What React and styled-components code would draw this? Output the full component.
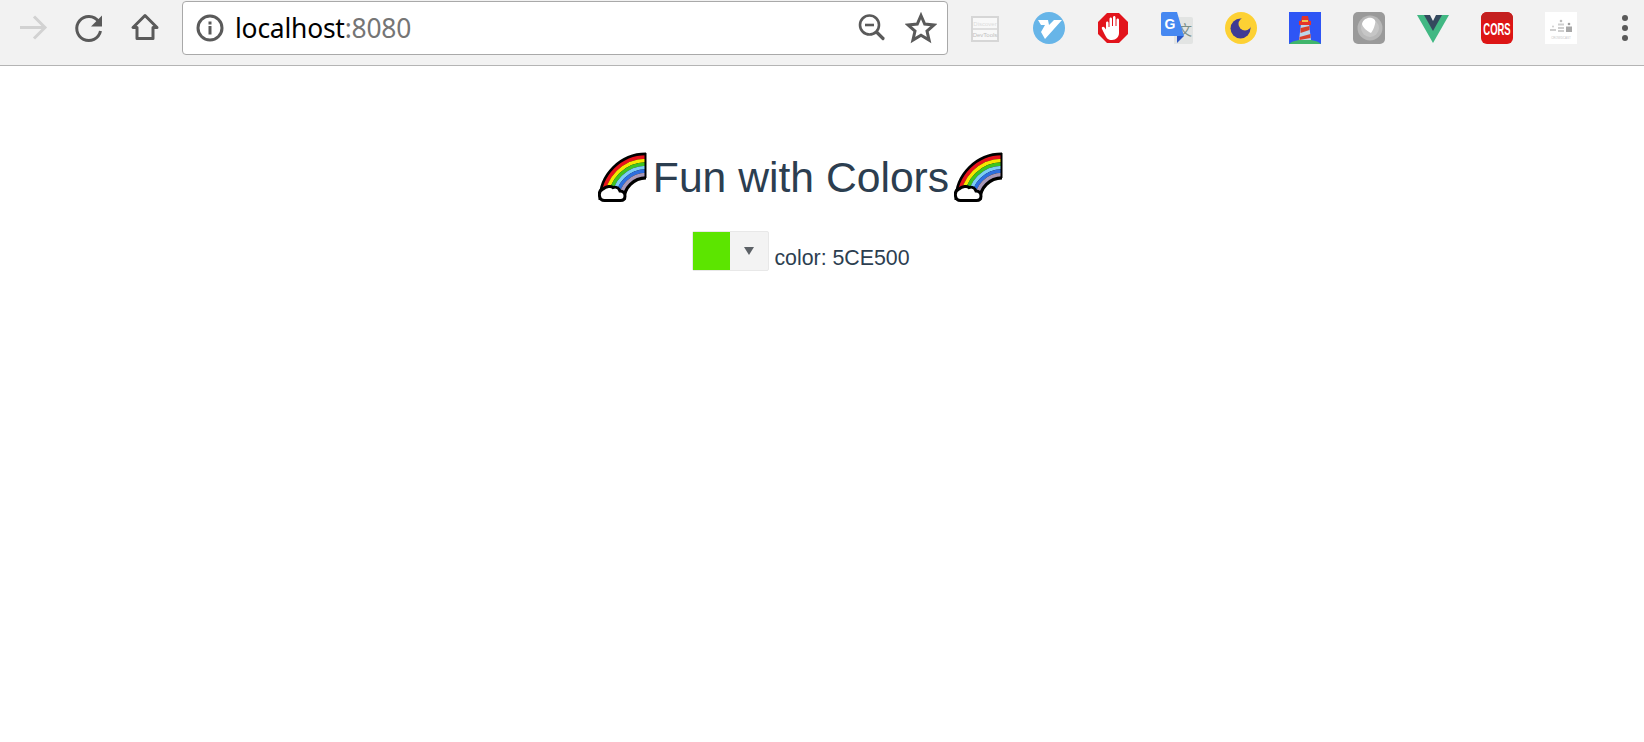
import React from "react";
import styled, { createGlobalStyle } from "styled-components";

const GlobalStyle = createGlobalStyle`
  html, body {
    margin: 0;
    background: #fff;
  }
`;

const Toolbar = styled.div`
  display: flex;
  align-items: center;
  height: 65px;
  background: #f2f2f2;
  border-bottom: 1px solid #b4b4b4;
`;

const NavButtons = styled.div`
  display: flex;
  align-items: center;
  gap: 24px;
  width: 182px;
  padding-left: 17px;
  padding-bottom: 9px;
  box-sizing: border-box;
`;

const NavIcon = styled.svg`
  width: 32px;
  height: 32px;
  display: block;
  flex: none;
`;

const AddressBar = styled.div`
  display: flex;
  align-items: center;
  width: 766px;
  height: 54px;
  margin-bottom: 9px;
  box-sizing: border-box;
  padding: 0 10px 0 11px;
  background: #fff;
  border: 1px solid #a9a9a9;
  border-radius: 4px;
`;

const Url = styled.div`
  flex: 1;
  margin-left: 9px;
  font-family: "Noto Sans", sans-serif;
  font-size: 26.4px;
  line-height: 1;
  color: #000;
  letter-spacing: -0.2px;
`;

const UrlPort = styled.span`
  color: #757575;
`;

const AddressActions = styled.div`
  display: flex;
  align-items: center;
  gap: 16px;
`;

const Extensions = styled.div`
  display: flex;
  align-items: center;
  gap: 32px;
  margin-left: 21px;
  margin-bottom: 9px;
`;

const ExtIcon = styled.svg`
  width: 32px;
  height: 32px;
  display: block;
  flex: none;
`;

const MenuDots = styled.div`
  display: flex;
  flex-direction: column;
  gap: 4px;
  margin-left: 45px;
  margin-bottom: 9px;
`;

const Dot = styled.span`
  width: 6px;
  height: 6px;
  border-radius: 50%;
  background: #5a5a5a;
`;

const Main = styled.main`
  width: 1602px;
  padding-top: 86px;
  text-align: center;
  color: #2c3e50;
  font-family: "Liberation Sans", Arial, sans-serif;
`;

const Title = styled.h1`
  display: flex;
  justify-content: center;
  align-items: center;
  gap: 5px;
  margin: 0;
  height: 50px;
  font-size: 42.67px;
  font-weight: 400;
  line-height: 50px;
`;

const RainbowIcon = styled.svg`
  width: 50px;
  height: 50px;
  display: block;
`;

const ColorRow = styled.div`
  display: flex;
  justify-content: center;
  align-items: flex-end;
  gap: 5px;
  margin-top: 29px;
`;

const Picker = styled.div`
  display: flex;
  width: 77px;
  height: 40px;
  box-sizing: border-box;
  border: 1px solid #e8e8e8;
  border-radius: 2px;
  background: #f3f3f3;
`;

const Swatch = styled.div`
  width: 37px;
  background: ${(props) => props.$color};
`;

const ArrowCell = styled.div`
  flex: 1;
  display: flex;
  justify-content: center;
  padding-top: 15px;
`;

const Arrow = styled.div`
  width: 0;
  height: 0;
  border-left: 5.5px solid transparent;
  border-right: 5.5px solid transparent;
  border-top: 8px solid #5c6166;
`;

const ColorLabel = styled.span`
  font-size: 21.33px;
  line-height: 24px;
  padding-bottom: 1px;
`;

const rainbowBands = [
  { r: 43, color: "#e8141c" },
  { r: 39.5, color: "#f7e600" },
  { r: 36, color: "#3fc41f" },
  { r: 32.5, color: "#7ccdf5" },
  { r: 29, color: "#2d6fe0" },
  { r: 25.5, color: "#a898b8" },
];

function arc(r) {
  return `M48 ${48 - r}A${r} ${r} 0 0 0 ${48 - r} 48`;
}

function Rainbow() {
  return (
    <RainbowIcon viewBox="0 0 50 50">
      <path d={arc(34)} fill="none" stroke="#000" strokeWidth="27" />
      {rainbowBands.map((band) => (
        <path
          key={band.r}
          d={arc(band.r)}
          fill="none"
          stroke={band.color}
          strokeWidth="3.6"
        />
      ))}
      <path d="M46.500 1v25h2V1z" fill="#000" />
      <path
        d="M5 37c-3 1-4 4-3.500 7 .5 3 2.500 4.500 5 4.500h16c3 0 4.500-2 4.500-4.500 0-3-2-5-5-5-1-3-4-4.500-7-3.500-1.500-2-7-1-10 1.500z"
        fill="#fff"
        stroke="#000"
        strokeWidth="3"
      />
    </RainbowIcon>
  );
}

function App() {
  return (
    <>
      <GlobalStyle />
      <Toolbar>
        <NavButtons>
          <NavIcon viewBox="0 0 32 32">
            <path
              d="M3 15.500h25M17 4.500l11 11-11 11"
              fill="none"
              stroke="#d2d2d2"
              strokeWidth="3"
            />
          </NavIcon>
          <NavIcon viewBox="0 0 32 32">
            <path
              d="M25.500 9.500A12 12 0 1 0 27.500 19"
              fill="none"
              stroke="#5a5a5a"
              strokeWidth="3"
            />
            <path d="M29 3.500v11H18z" fill="#5a5a5a" />
          </NavIcon>
          <NavIcon viewBox="0 0 32 32">
            <path
              d="M16 3.500L4 15.500h4v11h16v-11h4z"
              fill="none"
              stroke="#5a5a5a"
              strokeWidth="3"
              strokeLinejoin="round"
            />
          </NavIcon>
        </NavButtons>
        <AddressBar>
          <NavIcon viewBox="0 0 32 32">
            <circle cx="16" cy="16" r="12" fill="none" stroke="#5a5a5a" strokeWidth="3" />
            <path d="M14.500 14h3v8.500h-3zM14.500 9.500h3v3h-3z" fill="#5a5a5a" />
          </NavIcon>
          <Url>
            localhost<UrlPort>:8080</UrlPort>
          </Url>
          <AddressActions>
            <NavIcon viewBox="0 0 32 32">
              <circle cx="12.500" cy="13" r="9.500" fill="none" stroke="#5a5a5a" strokeWidth="2.600" />
              <path d="M8 13h9" stroke="#5a5a5a" strokeWidth="2.600" />
              <path d="M20 20.500l6 6" stroke="#5a5a5a" strokeWidth="3.200" strokeLinecap="round" />
            </NavIcon>
            <NavIcon viewBox="0 0 32 32">
              <path
                d="M16 3.500l3.700 8.600 9.300.8-7 6.100 2.100 9.100-8.100-4.800-8.100 4.800 2.100-9.100-7-6.100 9.300-.8z"
                fill="none"
                stroke="#5a5a5a"
                strokeWidth="3"
              />
            </NavIcon>
          </AddressActions>
        </AddressBar>
        <Extensions>
          <ExtIcon viewBox="0 0 32 32">
            <path d="M3 5h26v24H3z" fill="#f8f8f8" stroke="#d6d6d6" strokeWidth="2" />
            <path d="M3 17h26" stroke="#d6d6d6" strokeWidth="1.500" />
            <text x="16" y="14" textAnchor="middle" fontSize="6" fill="#dcdcdc" fontFamily="Liberation Sans">Discover</text>
            <text x="16" y="25" textAnchor="middle" fontSize="6" fill="#c0c0c0" fontFamily="Liberation Sans">DevTools</text>
          </ExtIcon>
          <ExtIcon viewBox="0 0 32 32">
            <circle cx="16" cy="16" r="16" fill="#67b5e8" />
            <path d="M5 8h10l1 5 5-5h8L12 27l-4-7 4-7H8z" fill="#fff" />
          </ExtIcon>
          <ExtIcon viewBox="0 0 32 32">
            <path d="M10 1h12l9 9v12l-9 9H10l-9-9V10z" fill="#e2141c" />
            <path
              d="M9 11c0-2 2.500-2 2.500 0v4h1V7c0-2 2.500-2 2.500 0v7h1V5.500c0-2 2.500-2 2.500 0V14h1V8c0-2 2.500-2 2.500 0v13c0 4-3 7-7 7-4 0-5.500-2-7-5l-3-6c-1-2 1.500-3 2.500-1.500l1.500 2z"
              fill="#fff"
            />
          </ExtIcon>
          <ExtIcon viewBox="0 0 32 32">
            <path d="M13 5h17a2 2 0 0 1 2 2v23a2 2 0 0 1-2 2H13z" fill="#e2e4e3" />
            <text x="24" y="23" textAnchor="middle" fontSize="14" fill="#7c8f88" fontFamily="Noto Sans CJK SC">文</text>
            <path d="M2 0h14l7 24H2a2 2 0 0 1-2-2V2a2 2 0 0 1 2-2z" fill="#4688f1" />
            <path d="M16 24h7l-7 7z" fill="#2a56c6" />
            <text x="9" y="17" textAnchor="middle" fontSize="14" fontWeight="700" fill="#fff" fontFamily="Liberation Sans">G</text>
          </ExtIcon>
          <ExtIcon viewBox="0 0 32 32">
            <circle cx="16" cy="16" r="16" fill="#fdd134" />
            <circle cx="15.500" cy="16.500" r="10" fill="#3f3a94" />
            <circle cx="20" cy="12" r="6.500" fill="#fdd134" />
          </ExtIcon>
          <ExtIcon viewBox="0 0 32 32">
            <path d="M0 0h32v32H0z" fill="#2e55f5" />
            <path d="M0 32c6-6 26-6 32 0z" fill="#3fb56b" />
            <path d="M12 12h8l2 16H10z" fill="#bcd6e8" />
            <path d="M11.500 16l9-2v4l-9 3zM10.500 25l11-3v4l-11 2z" fill="#d8402c" />
            <path d="M13 4h6l1 5h2v4H10V9h2z" fill="#e5352b" />
            <path d="M13 8h6v2h-6z" fill="#f2c04f" />
          </ExtIcon>
          <ExtIcon viewBox="0 0 32 32">
            <rect width="32" height="32" rx="5" fill="#9a9a9a" />
            <circle cx="17" cy="16" r="12.500" fill="#b8b8b8" />
            <circle cx="17" cy="16" r="9" fill="#c6c6c6" />
            <path d="M9 12c1-5 6-7 10-6 3 1 4 3 3 6-1 4-2 6-4 9-4-2-8-5-9-9z" fill="#fff" />
          </ExtIcon>
          <ExtIcon viewBox="0 0 32 32">
            <path d="M0 3h8l8 14 8-14h8L16 31z" fill="#41b883" />
            <path d="M7 3h6l3 6 3-6h6l-9 16z" fill="#34495e" />
          </ExtIcon>
          <ExtIcon viewBox="0 0 32 32">
            <rect width="32" height="32" rx="6" fill="#dd1515" />
            <path d="M0 6a6 6 0 0 1 6-6h20a6 6 0 0 1 6 6v2H0z" fill="#c42020" />
            <text
              transform="translate(16 23) scale(1 1.7)"
              textAnchor="middle"
              fontSize="9.500"
              fontWeight="700"
              fill="#fff"
              fontFamily="Liberation Sans"
            >
              CORS
            </text>
          </ExtIcon>
          <ExtIcon viewBox="0 0 32 32">
            <path d="M0 0h32v32H0z" fill="#fff" />
            <circle cx="8" cy="14.500" r="1" fill="#cfcfcf" />
            <circle cx="16" cy="9" r="1.300" fill="#bdbdbd" />
            <circle cx="24" cy="12" r="1.300" fill="#a0a0a0" />
            <path d="M5 17h6v2H5zM13 11.500h6v2h-6zM13 15h6v2h-6zM13 18h6v2h-6z" fill="#cfcfcf" />
            <path d="M21 14.500h6v5.500h-6z" fill="#a8a8a8" />
            <text x="16" y="26.500" textAnchor="middle" fontSize="3" fill="#c8c8c8" fontFamily="Liberation Sans">CROWDCAST</text>
          </ExtIcon>
        </Extensions>
        <MenuDots>
          <Dot />
          <Dot />
          <Dot />
        </MenuDots>
      </Toolbar>
      <Main>
        <Title>
          <Rainbow />
          Fun with Colors
          <Rainbow />
        </Title>
        <ColorRow>
          <Picker>
            <Swatch $color="#5ce500" />
            <ArrowCell>
              <Arrow />
            </ArrowCell>
          </Picker>
          <ColorLabel>color: 5CE500</ColorLabel>
        </ColorRow>
      </Main>
    </>
  );
}

export default App;
